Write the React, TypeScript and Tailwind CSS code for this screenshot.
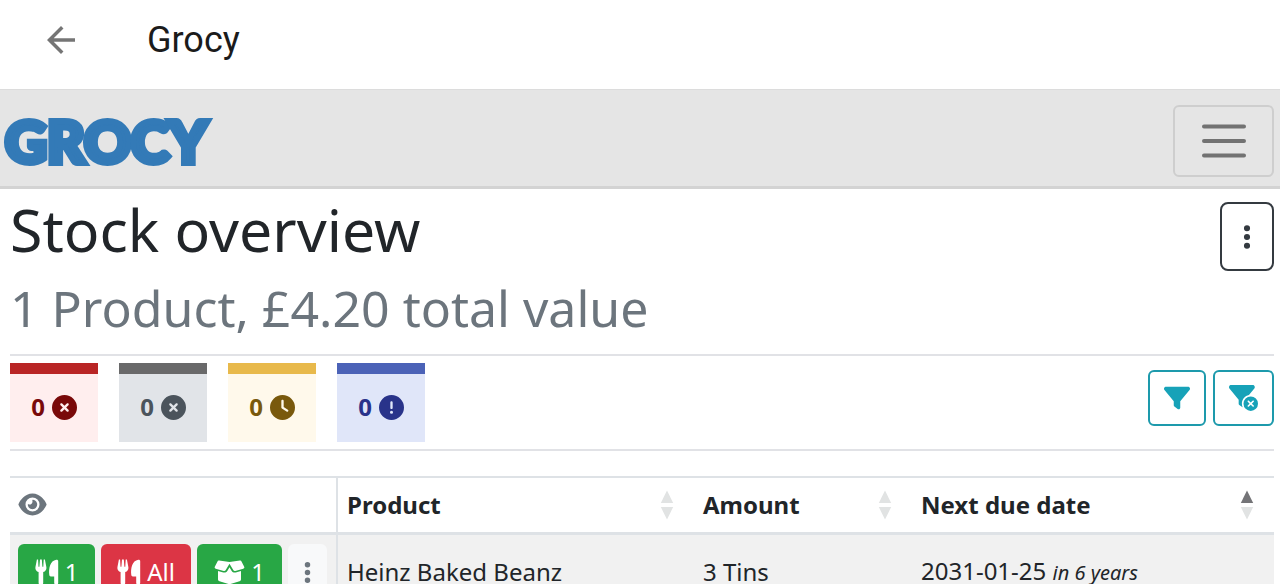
import React from 'react';
import {
  FaCircleExclamation,
  FaCircleXmark,
  FaClock,
  FaEllipsisVertical,
  FaEye,
  FaFilter,
  FaFilterCircleXmark,
} from 'react-icons/fa6';
import { MdArrowBack } from 'react-icons/md';

type SortDirection = 'asc' | 'desc';

const statusCards = [
  {
    label: 'Expired',
    count: 0,
    icon: <FaCircleXmark className="size-[25px]" />,
    className: 'border-[#b92525] bg-[#ffeeee] text-[#790909]',
  },
  {
    label: 'Overdue',
    count: 0,
    icon: <FaCircleXmark className="size-[25px]" />,
    className: 'border-[#69696a] bg-[#e1e4e8] text-[#4b545c]',
  },
  {
    label: 'Due soon',
    count: 0,
    icon: <FaClock className="size-[25px]" />,
    className: 'border-[#e8b94b] bg-[#fff9eb] text-[#79590c]',
  },
  {
    label: 'Below minimum stock',
    count: 0,
    icon: <FaCircleExclamation className="size-[25px]" />,
    className: 'border-[#4b62b7] bg-[#e0e6f9] text-[#29338a]',
  },
];

const UtensilsIcon: React.FC = () => (
  <svg viewBox="0 0 24 26" className="h-[26px] w-6" fill="currentColor" aria-hidden="true">
    <path d="M1.900.5h1.200l.4 7.300h.9L5 .5h1.800l.6 7.300h.9L8.700.5h1.200l1.500 7.700c.3 2.400-1 4.200-3.200 4.900V24c0 .9-.5 1.500-1.200 1.500H4.900c-.8 0-1.300-.6-1.300-1.500V13.100C1.400 12.400.1 10.600.4 8.200z" />
    <path d="M21.300.7c1.200-.1 1.900.4 1.900 1.500V24c0 .9-.6 1.500-1.400 1.500h-1.200c-.8 0-1.400-.6-1.400-1.500v-6.500h-3.400c-.9 0-1.400-.5-1.500-1.400-.8-6.800.8-14.400 7-15.400z" />
  </svg>
);

const BoxOpenIcon: React.FC = () => (
  <svg viewBox="0 0 31 25" className="h-[25px] w-[31px]" fill="currentColor" aria-hidden="true">
    <path d="M3.500 1.500c.3-.8.8-1 1.600-.9L15.500 2 25.900.6c.8-.1 1.300.1 1.600.9l2.700 5.300c.4.900 0 1.600-.9 1.900l-8 2.200c-.8.200-1.500 0-1.900-.7L15.500 3.700l-3.900 6.500c-.4.700-1.100.9-1.900.7l-8-2.200C.8 8.400.4 7.700.8 6.800z" />
    <path d="M15.500 7.200l2.200 3.700c.9 1.400 2.300 2 4 1.600l5.300-1.500v8.300c0 1-.6 1.700-1.500 2l-9 2.600c-.7.200-1.300.2-2 0l-9-2.600c-.9-.3-1.500-1-1.500-2V11l5.300 1.500c1.700.4 3.100-.2 4-1.600z" />
  </svg>
);

const SortArrows: React.FC<{ active?: SortDirection }> = ({ active }) => (
  <svg viewBox="0 0 14 30" className="h-[30px] w-[14px]" aria-hidden="true">
    <path d="M7 0.5 13.2 13H.8z" fill={active === 'asc' ? '#747477' : '#e1e3e3'} />
    <path d="M7 29.500 13.2 17H.8z" fill={active === 'desc' ? '#747477' : '#e1e3e3'} />
  </svg>
);

const HeaderCell: React.FC<{ label: string; className?: string; sort?: SortDirection }> = ({
  label,
  className,
  sort,
}) => (
  <th scope="col" className={className}>
    <button type="button" className="flex w-full items-center justify-between pl-[9px] pr-5 font-bold">
      {label}
      <SortArrows active={sort} />
    </button>
  </th>
);

const App: React.FC = () => {
  return (
    <div className="bg-white font-['Noto_Sans',sans-serif] text-[24px] leading-9 text-[#212529]">
      <header className="flex h-[89px] items-center gap-[65px] pb-[10px] pl-10 font-['Roboto',sans-serif]">
        <button type="button" aria-label="Back" className="text-[#757575]">
          <MdArrowBack className="size-[42px]" />
        </button>
        <div className="text-[36px] text-[#1b1b1b]">Grocy</div>
      </header>

      <nav className="flex h-[100px] items-center justify-between border-b-[3px] border-t border-b-[#d3d3d3] border-t-[#dcdcdc] bg-[#e5e5e5] pl-[5px] pr-[6px] pt-[6px]">
        <a
          href="#"
          className="font-['Lato',sans-serif] text-[58px] font-black leading-none text-[#337ab7] [-webkit-text-stroke:6px_#337ab7]"
        >
          GROCY
        </a>
        <button
          type="button"
          aria-label="Toggle navigation"
          className="flex h-[72px] w-[101px] items-center justify-center rounded-md border-2 border-[#cecece]"
        >
          <svg viewBox="0 0 44 34" className="h-[34px] w-11" stroke="#727272" strokeWidth="4" strokeLinecap="round">
            <path d="M2 2.500h40M2 17h40M2 31.500h40" />
          </svg>
        </button>
      </nav>

      <main className="pl-[10px] pr-[6px]">
        <div className="flex items-start justify-between pt-1">
          <div>
            <h1 className="text-[59px] leading-[72px]">Stock overview</h1>
            <h2 className="pt-[7px] text-[50px] leading-[72px] text-[#6c757d]">1 Product, £4.20 total value</h2>
          </div>
          <button
            type="button"
            aria-label="More"
            className="mt-[9px] flex h-[69px] w-[54px] items-center justify-center rounded-lg border-2 border-[#343a40] text-[#343a40]"
          >
            <FaEllipsisVertical className="size-7" />
          </button>
        </div>

        <div className="mt-[10px] flex items-start justify-between border-y-2 border-[#e1e2e6] py-[7px]">
          <div className="flex gap-[21px]">
            {statusCards.map(({ label, count, icon, className }) => (
              <button
                key={label}
                type="button"
                aria-label={label}
                className={`flex h-[79px] w-[88px] items-center justify-center gap-[7px] border-t-[11px] pb-[2px] font-bold ${className}`}
              >
                {count}
                {icon}
              </button>
            ))}
          </div>
          <div className="mt-[7px] flex gap-[7px] text-[#17a2b8]">
            <button
              type="button"
              aria-label="Filter"
              className="flex h-14 w-[58px] items-center justify-center rounded-md border-2 border-[#1d9aac]"
            >
              <FaFilter className="size-[26px]" />
            </button>
            <button
              type="button"
              aria-label="Clear filter"
              className="flex h-14 w-[61px] items-center justify-center rounded-md border-2 border-[#1d9aac]"
            >
              <FaFilterCircleXmark className="h-[26px] w-[29px]" />
            </button>
          </div>
        </div>

        <table className="mt-[25px] w-full table-fixed border-separate border-spacing-0 text-left">
          <thead>
            <tr className="h-[59px] *:border-b-[3px] *:border-t-2 *:border-[#dee2e6] *:pb-px">
              <th scope="col" className="w-[328px] border-r-2 pl-2">
                <button type="button" aria-label="Table options" className="flex text-[#6c757d]">
                  <FaEye className="h-[25px] w-[29px]" />
                </button>
              </th>
              <HeaderCell label="Product" className="w-[356px]" />
              <HeaderCell label="Amount" className="w-[218px]" />
              <HeaderCell label="Next due date" sort="asc" />
            </tr>
          </thead>
          <tbody>
            <tr className="h-[74px] bg-[#f1f1f1]">
              <td className="border-r-2 border-[#dee2e6] pl-2">
                <div className="flex gap-[6px] text-white">
                  <button
                    type="button"
                    aria-label="Consume 1"
                    className="flex h-14 w-[77px] items-center justify-center gap-[6px] rounded-md bg-[#28a745]"
                  >
                    <UtensilsIcon />1
                  </button>
                  <button
                    type="button"
                    aria-label="Consume all"
                    className="flex h-14 w-[90px] items-center justify-center gap-[6px] rounded-md bg-[#dc3545]"
                  >
                    <UtensilsIcon />
                    All
                  </button>
                  <button
                    type="button"
                    aria-label="Open 1"
                    className="flex h-14 w-[85px] items-center justify-center gap-[6px] rounded-md bg-[#28a745]"
                  >
                    <BoxOpenIcon />1
                  </button>
                  <button
                    type="button"
                    aria-label="Row menu"
                    className="flex h-14 w-[39px] items-center justify-center rounded-md bg-[#f8f9fa] text-[#6c757d]"
                  >
                    <FaEllipsisVertical className="size-[25px]" />
                  </button>
                </div>
              </td>
              <td className="pl-[9px]">Heinz Baked Beanz</td>
              <td className="pl-[9px]">3 Tins</td>
              <td className="pl-[9px]">
                2031-01-25 <em className="text-[20px]">in 6 years</em>
              </td>
            </tr>
          </tbody>
        </table>
      </main>
    </div>
  );
};

export default App;
